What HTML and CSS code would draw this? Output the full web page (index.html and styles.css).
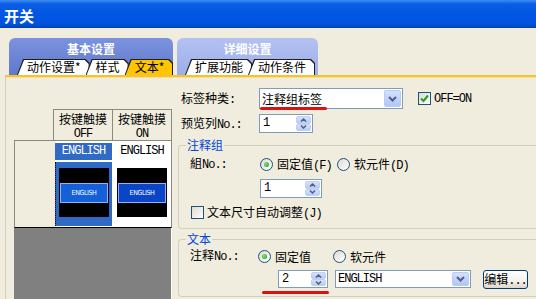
FILE: index.html
```html
<!DOCTYPE html>
<html lang="zh-CN">
<head>
    <meta charset="UTF-8">
    <meta name="viewport" content="width=device-width, initial-scale=1.0">
    <title>开关</title>
    <link rel="stylesheet" href="styles.css">
</head>
<body>
    <div class="dialog">
        <div class="titlebar">开关</div>

        <div class="tabbar">
            <div class="tabgroup basic">
                <div class="tabgroup-title">基本设置</div>
                <div class="subtabs">
                    <span class="subtab">动作设置*</span>
                    <span class="subtab">样式</span>
                    <span class="subtab active">文本*</span>
                </div>
            </div>
            <div class="tabgroup detail">
                <div class="tabgroup-title">详细设置</div>
                <div class="subtabs">
                    <span class="subtab">扩展功能</span>
                    <span class="subtab">动作条件</span>
                </div>
            </div>
        </div>

        <div class="panel">
            <!-- Preview of both switch states -->
            <div class="preview">
                <div class="preview-head">
                    <div class="head-cell">按键触摸<br><span class="en">OFF</span></div>
                    <div class="head-cell">按键触摸<br><span class="en">ON</span></div>
                </div>
                <div class="preview-body">
                    <div class="row-label"></div>
                    <div class="state-col off">
                        <div class="lang-cell en">ENGLISH</div>
                        <div class="pic-cell">
                            <div class="lamp"><div class="lamp-btn">ENGLISH</div></div>
                        </div>
                    </div>
                    <div class="state-col on">
                        <div class="lang-cell en">ENGLISH</div>
                        <div class="pic-cell">
                            <div class="lamp"><div class="lamp-btn">ENGLISH</div></div>
                        </div>
                    </div>
                </div>
                <div class="preview-empty"></div>
            </div>

            <!-- Settings -->
            <div class="form">
                <div class="field-row first">
                    <span class="field-label">标签种类<span class="en">:</span></span>
                    <div class="combo type-combo">
                        <span class="combo-text">注释组标签</span>
                        <span class="combo-arrow">
                            <svg width="9" height="6" viewBox="0 0 9 6"><path d="M1 1l3.5 3.5L8 1" fill="none" stroke="#4d6185" stroke-width="2"/></svg>
                        </span>
                        <span class="ink-mark type-mark"></span>
                    </div>
                    <label class="check-item off-on">
                        <span class="checkbox">
                            <svg width="9" height="9" viewBox="0 0 9 9"><path d="M1 4.5l2.5 2.5L8 1.5" fill="none" stroke="#21a121" stroke-width="2"/></svg>
                        </span>
                        <span class="en">OFF=ON</span>
                    </label>
                </div>

                <div class="field-row second">
                    <span class="field-label">预览列<span class="en">No.:</span></span>
                    <div class="spin preview-spin">
                        <span class="spin-text en">1</span>
                        <span class="spin-btns">
                            <span class="spin-btn"><svg width="7" height="4" viewBox="0 0 7 4"><path d="M1 3.5L3.5 1 6 3.5" fill="none" stroke="#4d6185" stroke-width="1.5"/></svg></span>
                            <span class="spin-btn"><svg width="7" height="4" viewBox="0 0 7 4"><path d="M1 .5L3.5 3 6 .5" fill="none" stroke="#4d6185" stroke-width="1.5"/></svg></span>
                        </span>
                    </div>
                </div>

                <div class="group comment-group">
                    <div class="group-title">注释组</div>
                    <div class="field-row radio-row">
                        <span class="field-label">組<span class="en">No.:</span></span>
                        <label class="radio-item"><span class="radio checked"></span><span>固定值<span class="en">(F)</span></span></label>
                        <label class="radio-item"><span class="radio"></span><span>软元件<span class="en">(D)</span></span></label>
                    </div>
                    <div class="spin group-spin">
                        <span class="spin-text en">1</span>
                        <span class="spin-btns">
                            <span class="spin-btn"><svg width="7" height="4" viewBox="0 0 7 4"><path d="M1 3.5L3.5 1 6 3.5" fill="none" stroke="#4d6185" stroke-width="1.5"/></svg></span>
                            <span class="spin-btn"><svg width="7" height="4" viewBox="0 0 7 4"><path d="M1 .5L3.5 3 6 .5" fill="none" stroke="#4d6185" stroke-width="1.5"/></svg></span>
                        </span>
                    </div>
                    <label class="check-item autosize">
                        <span class="checkbox"></span>
                        <span>文本尺寸自动调整<span class="en">(J)</span></span>
                    </label>
                </div>

                <div class="group text-group">
                    <div class="group-title">文本</div>
                    <div class="field-row radio-row">
                        <span class="field-label">注释<span class="en">No.:</span></span>
                        <label class="radio-item"><span class="radio checked"></span><span>固定值</span></label>
                        <label class="radio-item"><span class="radio"></span><span>软元件</span></label>
                    </div>
                    <div class="field-row comment-row">
                        <div class="spin comment-spin">
                            <span class="spin-text en">2</span>
                            <span class="spin-btns">
                                <span class="spin-btn"><svg width="7" height="4" viewBox="0 0 7 4"><path d="M1 3.5L3.5 1 6 3.5" fill="none" stroke="#4d6185" stroke-width="1.5"/></svg></span>
                                <span class="spin-btn"><svg width="7" height="4" viewBox="0 0 7 4"><path d="M1 .5L3.5 3 6 .5" fill="none" stroke="#4d6185" stroke-width="1.5"/></svg></span>
                            </span>
                        </div>
                        <div class="combo lang-combo">
                            <span class="combo-text en">ENGLISH</span>
                            <span class="combo-arrow">
                                <svg width="9" height="6" viewBox="0 0 9 6"><path d="M1 1l3.5 3.5L8 1" fill="none" stroke="#4d6185" stroke-width="2"/></svg>
                            </span>
                        </div>
                        <button class="btn">编辑<span class="en">...</span></button>
                        <span class="ink-mark comment-mark"></span>
                    </div>
                </div>
            </div>
        </div>
    </div>
</body>
</html>
```

FILE: styles.css
```css
:root {
    --face: #f0edde;
    --field-border: #7f9db9;
    --group-line: #d0d0bf;
    --group-title: #0046d5;
    --grid-line: #8d8a7c;
    --select-blue: #316ac5;
}

* {
    margin: 0;
    padding: 0;
    box-sizing: border-box;
}

body {
    background: var(--face);
    font-family: "Noto Sans CJK SC", sans-serif;
    font-size: 12px;
    color: #000;
    overflow: hidden;
}

/* Latin text in the dialog font is narrow and fixed width */
.en {
    font-family: "Liberation Mono", monospace;
    font-size: 12px;
    letter-spacing: -1px;
}

.dialog {
    width: 536px;
    height: 299px;
    display: flex;
    flex-direction: column;
}

/* Title bar */
.titlebar {
    height: 28px;
    padding: 4px 0 0 4px;
    line-height: 24px;
    font-size: 15px;
    font-weight: 700;
    color: #fff;
    background: linear-gradient(#3d8cf5 0, #0a5ee3 4px, #0056e4 50%, #0053dc 85%, #0042b8 100%);
}

/* Tabs */
.tabbar {
    display: flex;
    gap: 4px;
    padding: 10px 0 0 9px;
}

.tabgroup {
    display: flex;
    flex-direction: column;
    padding-left: 8px;
    border-radius: 6px 6px 0 0;
}

.tabgroup.basic {
    width: 164px;
    background: linear-gradient(#7b93df, #5f78c9);
}

.tabgroup.detail {
    width: 141px;
    background: linear-gradient(#b4c2f2, #9caee8);
}

.tabgroup-title {
    height: 21px;
    margin-left: -8px;
    line-height: 21px;
    text-align: center;
    color: #fff;
    font-weight: 700;
}

.subtabs {
    display: flex;
    height: 16px;
}

.subtab {
    position: relative;
    z-index: 0;
    height: 16px;
    padding: 0 9px 0 10px;
    line-height: 16px;
    white-space: nowrap;
    background: #1e1e1e;
    clip-path: polygon(6px 0, calc(100% - 4px) 0, 100% 4px, 100% 100%, 0 100%);
}

.subtab + .subtab {
    margin-left: -4px;
}

.subtab::before {
    content: "";
    position: absolute;
    inset: 1px 1px 0 1px;
    z-index: -1;
    background: #fff;
    clip-path: polygon(6px 0, calc(100% - 4px) 0, 100% 4px, 100% 100%, 0 100%);
}

.subtab.active::before {
    background: #ffc600;
}

/* Page */
.panel {
    flex: 1;
    display: flex;
    min-height: 0;
    margin-left: 5px;
    border-left: 1px solid #d2cdb6;
    border-top: 2px solid #f3c13a;
    box-shadow: inset 0 1px #fbe08a;
}

/* Preview table */
.preview {
    width: 166px;
    flex-shrink: 0;
    display: flex;
    flex-direction: column;
    padding: 32px 0 0 8px;
}

.preview-head {
    display: flex;
    padding-left: 39px;
}

.head-cell {
    width: 60px;
    height: 31px;
    padding-top: 2px;
    border: 1px solid var(--grid-line);
    border-bottom: none;
    text-align: center;
    line-height: 13px;
}

.head-cell + .head-cell {
    margin-left: -1px;
}

.preview-body {
    display: flex;
    height: 88px;
    border: 1px solid var(--grid-line);
    border-bottom-color: #000;
    background: #fff;
}

.row-label {
    width: 40px;
    background: var(--face);
}

.state-col {
    display: flex;
    flex-direction: column;
    padding-top: 2px;
}

.state-col.off {
    width: 57px;
}

.state-col.on {
    width: 58px;
    margin-left: 1px;
}

.lang-cell {
    height: 17px;
    line-height: 17px;
    text-align: center;
}

.off .lang-cell {
    background: var(--select-blue);
    color: #fff;
}

.pic-cell {
    flex: 1;
    margin: 2px 0 1px;
    padding-top: 6px;
}

.off .pic-cell {
    background: var(--select-blue);
    border-left: 1px dotted #000;
}

.lamp {
    width: 50px;
    height: 49px;
    margin: 0 auto;
    padding-top: 15px;
    background: #000;
}

.lamp-btn {
    height: 20px;
    margin: 0 1px;
    border: 1px solid #8fb3f5;
    background: #1460d8;
    color: #fff;
    font: 7px "DejaVu Sans Condensed", "DejaVu Sans", sans-serif;
    line-height: 18px;
    text-align: center;
    letter-spacing: -0.4px;
}

.on .lamp-btn {
    background: #0a45c8;
}

.preview-empty {
    flex: 1;
    background: #808080;
    border-right: 1px solid #fff;
}

/* Settings form */
.form {
    flex: 1;
    min-width: 0;
    padding: 11px 0 0 9px;
    overflow: hidden;
}

.field-row {
    display: flex;
    align-items: center;
}

.field-label {
    width: 78px;
    flex-shrink: 0;
    line-height: 16px;
    white-space: nowrap;
}

.field-row.first {
    height: 21px;
}

.field-row.second {
    height: 19px;
    margin-top: 5px;
}

/* Combo box */
.combo {
    position: relative;
    display: flex;
    padding: 1px;
    border: 1px solid var(--field-border);
    background: #fff;
}

.type-combo {
    width: 144px;
    height: 21px;
}

.combo-text {
    flex: 1;
    padding-left: 1px;
    line-height: 17px;
    white-space: nowrap;
    overflow: hidden;
}

.lang-combo .combo-text {
    line-height: 14px;
}

.combo-arrow {
    width: 17px;
    display: flex;
    align-items: center;
    justify-content: center;
    border: 1px solid #b9cbf3;
    border-radius: 2px;
    background: linear-gradient(#d4e0fd, #b2c5f6);
}

/* Spin box */
.spin {
    display: flex;
    height: 19px;
    padding: 1px;
    border: 1px solid var(--field-border);
    background: #fff;
}

.spin-text {
    flex: 1;
    padding-left: 2px;
    line-height: 15px;
}

.spin-btns {
    width: 15px;
    display: flex;
    flex-direction: column;
}

.spin-btn {
    flex: 1;
    display: flex;
    align-items: center;
    justify-content: center;
    border: 1px solid #c0cff2;
    border-radius: 2px;
    background: linear-gradient(#d6e1fc, #b8caf5);
}

.preview-spin {
    width: 54px;
}

/* Check boxes and radios */
.check-item {
    display: flex;
    align-items: center;
    gap: 3px;
    white-space: nowrap;
}

.off-on {
    margin-left: 15px;
}

.checkbox {
    width: 13px;
    height: 13px;
    flex-shrink: 0;
    display: flex;
    align-items: center;
    justify-content: center;
    border: 1px solid #1c5180;
    background: linear-gradient(135deg, #dcdad0, #fff);
}

.radio-item {
    display: flex;
    align-items: center;
    gap: 4px;
    white-space: nowrap;
}

.radio {
    position: relative;
    width: 13px;
    height: 13px;
    flex-shrink: 0;
    border: 1px solid #1c5180;
    border-radius: 50%;
    background: linear-gradient(135deg, #dcdad0, #fff);
}

.radio.checked::after {
    content: "";
    position: absolute;
    inset: 3px;
    border-radius: 50%;
    background: radial-gradient(circle at 35% 35%, #7be07a, #21a121);
}

/* Group boxes */
.group {
    margin-left: -3px;
    padding: 0 0 8px 11px;
    border: 1px solid var(--group-line);
    border-right: none;
    border-radius: 4px 0 0 4px;
}

.comment-group {
    margin-top: 12px;
}

.text-group {
    margin-top: 10px;
}

.group-title {
    width: fit-content;
    margin: -8px 0 0 -4px;
    padding: 0 1px;
    line-height: 14px;
    color: var(--group-title);
    background: var(--face);
}

.group .field-label {
    width: 70px;
}

.text-group .field-label {
    width: 68px;
}

.radio-row {
    height: 16px;
    margin-top: 4px;
}

.text-group .radio-row {
    margin-top: 2px;
}

.comment-group .radio-item:nth-child(2) {
    width: 77px;
}

.text-group .radio-item:nth-child(2) {
    width: 75px;
}

.group-spin {
    width: 62px;
    margin: 7px 0 0 70px;
}

.autosize {
    height: 16px;
    margin: 6px 0 0 1px;
}

.comment-row {
    position: relative;
    height: 18px;
    margin-top: 6px;
}

.comment-spin {
    width: 50px;
    height: 18px;
    margin-left: 88px;
}

.lang-combo {
    width: 136px;
    height: 18px;
    margin-left: 7px;
}

.btn {
    width: 45px;
    height: 19px;
    margin-left: 12px;
    border: 1px solid #003c74;
    border-radius: 3px;
    background: linear-gradient(#fff, #f3f2ec 60%, #dcd7cb);
    font-family: inherit;
    font-size: 12px;
    line-height: 15px;
}

/* Red annotation strokes drawn over the screenshot */
.ink-mark {
    position: absolute;
    height: 3px;
    border-radius: 2px;
    background: #e01010;
}

.type-mark {
    left: 0;
    top: 18px;
    width: 67px;
}

.comment-mark {
    left: 72px;
    top: 21px;
    width: 67px;
}
```
